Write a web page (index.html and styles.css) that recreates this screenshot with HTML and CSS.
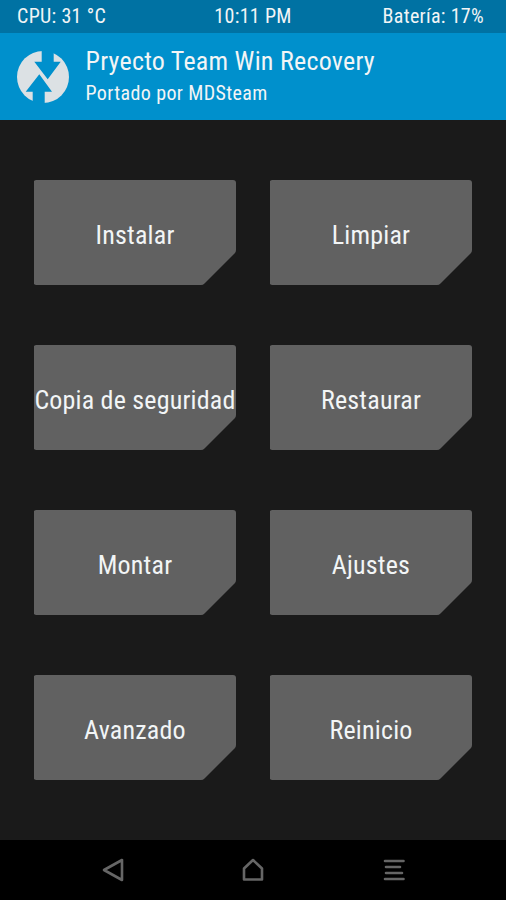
FILE: index.html
```html
<!DOCTYPE html>
<html lang="es">
<head>
<meta charset="utf-8">
<title>Pryecto Team Win Recovery</title>
<link rel="stylesheet" href="styles.css">
</head>
<body>
<div class="status">
  <span>CPU: 31 °C</span>
  <span class="clock">10:11 PM</span>
  <span class="battery">Batería: 17%</span>
</div>
<header class="header">
  <svg class="logo" viewBox="0 0 52 52">
    <circle class="disc" cx="26" cy="26" r="26"/>
    <path class="arrows" d="M24.7-1H36.7V10.7H43.7L30.7 28.3L17.3 10.7H24.7ZM22.3 23.3L35 40.7H27.7V53H15.7V40.7H8.7Z"/>
  </svg>
  <div class="titles">
    <div class="title">Pryecto Team Win Recovery</div>
    <div class="subtitle">Portado por MDSteam</div>
  </div>
</header>
<main class="menu">
  <button class="tile">Instalar</button>
  <button class="tile">Limpiar</button>
  <button class="tile">Copia de seguridad</button>
  <button class="tile">Restaurar</button>
  <button class="tile">Montar</button>
  <button class="tile">Ajustes</button>
  <button class="tile">Avanzado</button>
  <button class="tile">Reinicio</button>
</main>
<nav class="nav">
  <svg class="icon" viewBox="0 0 24 24"><path d="M21 2V22L3 12Z"/></svg>
  <svg class="icon" viewBox="0 0 24 24"><path d="M12 2L21 10.5V21.500H3V10.500Z"/></svg>
  <svg class="icon" viewBox="0 0 24 24"><path d="M3 3H21.500M4 9H18M4 15H20M3 21H21.500"/></svg>
</nav>
</body>
</html>
```
FILE: styles.css
```css
body {
  margin: 0;
  height: 900px;
  display: flex;
  flex-direction: column;
  background: #1a1a1a;
  color: #f2f5f6;
  font-family: "Roboto Condensed", Roboto, sans-serif;
  font-stretch: 75%;
  overflow: hidden;
}
svg { display: block; flex: none; }
.status {
  box-sizing: border-box;
  height: 33px;
  background: #0072a3;
  display: grid;
  grid-template-columns: 1fr auto 1fr;
  padding: 0 22px 0 17px;
  font-size: 20px;
  line-height: 32px;
  letter-spacing: 0.3px;
}
.clock { margin-left: 5px; }
.battery { text-align: right; }
.header {
  box-sizing: border-box;
  height: 87px;
  background: #0090cc;
  display: flex;
  gap: 16.5px;
  padding: 11px 17px 0;
}
.logo { width: 52px; height: 52px; margin-top: 7px; }
.disc { fill: #dce1e4; }
.arrows { fill: #0090cc; }
.title { font-size: 26px; line-height: 34px; letter-spacing: 0.25px; }
.subtitle { font-size: 20px; line-height: 30px; letter-spacing: 0.38px; }
.menu {
  box-sizing: border-box;
  height: 720px;
  padding: 60px 33.5px;
  display: grid;
  grid-template-columns: 203px 203px;
  grid-auto-rows: 105px;
  gap: 60px 33px;
}
.tile {
  padding: 4px 0 0;
  border: 0;
  background: #616161;
  clip-path: path("M3 0H199.500Q202.500 0 202.500 3V70Q202.500 72 201 73.500L171 103.500Q169.500 105 167.500 105H3Q0 105 0 102V3Q0 0 3 0Z");
  color: inherit;
  font: inherit;
  font-size: 26px;
  letter-spacing: 0.2px;
  white-space: nowrap;
}
.nav {
  height: 60px;
  background: #000;
  display: flex;
  align-items: center;
  justify-content: space-between;
  padding: 0 100.5px 0 100.5px;
}
.icon {
  width: 24px;
  height: 24px;
  fill: none;
  stroke: #666;
  stroke-width: 2.6;
  stroke-linecap: round;
  stroke-linejoin: round;
}
```
